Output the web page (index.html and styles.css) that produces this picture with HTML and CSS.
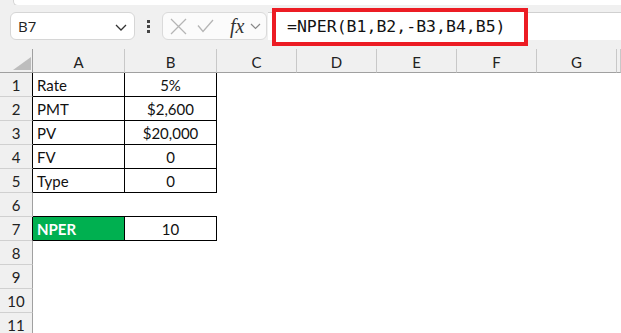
FILE: index.html
```html
<!DOCTYPE html>
<html lang="en">
<head>
  <meta charset="UTF-8">
  <title>NPER - Excel</title>
  <link rel="stylesheet" href="styles.css">
</head>
<body>
  <div class="ribbon-edge"></div>

  <!-- Name box + formula bar -->
  <div class="toolbar">
    <div class="name-box">
      <span>B7</span>
      <svg class="chev" width="12" height="7" viewBox="0 0 12 7"><path d="M1 1 L6 6 L11 1" fill="none" stroke="#333" stroke-width="1.3"/></svg>
    </div>
    <div class="grip"><i></i><i></i><i></i></div>
    <div class="fx-box">
      <svg width="17" height="17" viewBox="0 0 17 17"><path d="M1 1 L16 16 M16 1 L1 16" stroke="#b5b5b5" stroke-width="1.3"/></svg>
      <svg width="17" height="14" viewBox="0 0 17 14"><path d="M1 6.5 L6 12.5 L16 1" fill="none" stroke="#b5b5b5" stroke-width="1.3"/></svg>
      <span class="fx">fx</span>
      <svg width="11" height="7" viewBox="0 0 11 7"><path d="M1 1 L5.5 5.5 L10 1" fill="none" stroke="#888" stroke-width="1.2"/></svg>
    </div>
    <div class="formula-bar">
      <div class="formula">=NPER(B1,B2,-B3,B4,B5)</div>
    </div>
  </div>

  <table class="sheet">
    <colgroup>
      <col class="c-row"><col class="c-wide"><col class="c-wide">
      <col class="c-std"><col class="c-std"><col class="c-std"><col class="c-std"><col class="c-std"><col>
    </colgroup>
    <tr class="head">
      <th class="corner"><span class="tri"></span></th>
      <th>A</th><th>B</th><th>C</th><th>D</th><th>E</th><th>F</th><th>G</th><th></th>
    </tr>
    <tr>
      <th class="rh edge">1</th><td class="box">Rate</td><td class="box num">5%</td>
      <td></td><td></td><td></td><td></td><td></td><td></td>
    </tr>
    <tr>
      <th class="rh edge">2</th><td class="box">PMT</td><td class="box num">$2,600</td>
      <td></td><td></td><td></td><td></td><td></td><td></td>
    </tr>
    <tr>
      <th class="rh edge">3</th><td class="box">PV</td><td class="box num">$20,000</td>
      <td></td><td></td><td></td><td></td><td></td><td></td>
    </tr>
    <tr>
      <th class="rh edge">4</th><td class="box">FV</td><td class="box num">0</td>
      <td></td><td></td><td></td><td></td><td></td><td></td>
    </tr>
    <tr>
      <th class="rh edge">5</th><td class="box">Type</td><td class="box num">0</td>
      <td></td><td></td><td></td><td></td><td></td><td></td>
    </tr>
    <tr>
      <th class="rh">6</th><td class="under"></td><td class="under"></td>
      <td></td><td></td><td></td><td></td><td></td><td></td>
    </tr>
    <tr>
      <th class="rh edge">7</th><td class="box result">NPER</td><td class="box num">10</td>
      <td></td><td></td><td></td><td></td><td></td><td></td>
    </tr>
    <tr><th class="rh">8</th><td></td><td></td><td></td><td></td><td></td><td></td><td></td><td></td></tr>
    <tr><th class="rh">9</th><td></td><td></td><td></td><td></td><td></td><td></td><td></td><td></td></tr>
    <tr><th class="rh">10</th><td></td><td></td><td></td><td></td><td></td><td></td><td></td><td></td></tr>
    <tr><th class="rh">11</th><td></td><td></td><td></td><td></td><td></td><td></td><td></td><td></td></tr>
  </table>
</body>
</html>
```

FILE: styles.css
```css
* {
  box-sizing: border-box;
}

body {
  margin: 0;
  background: #fff;
  font-family: 'Lato', 'Liberation Sans', sans-serif;
  color: #111;
  overflow: hidden;
  width: 621px;
  height: 333px;
}

/* top of ribbon panel */
.ribbon-edge {
  height: 5px;
  background: #f0f0f0;
}

.ribbon-edge::after {
  content: "";
  display: block;
  margin-left: 13px;
  height: 5px;
  background: #fff;
  border-left: 1px solid #d4d4d4;
  border-bottom: 1px solid #d4d4d4;
  border-bottom-left-radius: 5px;
}

/* Toolbar */
.toolbar {
  height: 44px;
  background: #f0f0f0;
  display: flex;
  align-items: flex-start;
  padding-top: 7px;
  padding-left: 10px;
}

.name-box {
  width: 125px;
  height: 28px;
  background: #fff;
  border: 1px solid #d6d6d6;
  border-radius: 6px;
  display: flex;
  align-items: center;
  justify-content: space-between;
  padding: 0 7px 0 7px;
  font-family: 'Open Sans', sans-serif;
  font-size: 15px;
  color: #222;
}

.name-box .chev {
  margin-top: 2px;
}

.grip {
  width: 27px;
  height: 28px;
  display: flex;
  flex-direction: column;
  align-items: center;
  justify-content: center;
  gap: 2px;
}

.grip i {
  display: block;
  width: 3px;
  height: 3px;
  background: #444;
}

.fx-box {
  width: 105px;
  height: 28px;
  background: #fbfbfb;
  border: 1px solid #dadada;
  border-radius: 6px;
  display: flex;
  align-items: center;
  padding-left: 7px;
  gap: 10px;
}

.fx-box .fx {
  font-family: 'Liberation Serif', serif;
  font-style: italic;
  font-size: 20px;
  color: #333;
  margin-left: 6px;
  margin-right: -4px;
  line-height: 1;
}

.formula-bar {
  flex: 1;
  height: 28px;
  background: #fff;
  border-top: 1px solid #d0d0d0;
  margin-left: 1px;
  display: flex;
  align-items: center;
}

.formula {
  flex: none;
  width: 256px;
  height: 38px;
  margin-left: 4px;
  border: 4px solid #ec1c24;
  background: #fff;
  font-family: 'DejaVu Sans Mono', monospace;
  font-size: 16.5px;
  color: #111;
  padding-left: 11px;
  line-height: 29px;
  white-space: nowrap;
}

/* Grid */
.sheet {
  table-layout: fixed;
  width: 621px;
  border-collapse: separate;
  border-spacing: 0;
  font-size: 15px;
}

.c-row { width: 33px; }
.c-wide { width: 92px; }
.c-std { width: 80px; }

.sheet td,
.sheet th {
  height: 24px;
  padding: 0;
  font-weight: normal;
}

.head th {
  background: #f0f0f0;
  border-right: 1px solid #c8c8c8;
  border-bottom: 1px solid #a0a0a0;
  text-align: center;
  color: #222;
  padding-top: 2px;
}

.head .corner {
  position: relative;
  border-right-color: #a0a0a0;
}

.tri {
  position: absolute;
  right: 1px;
  bottom: 2px;
  width: 0;
  height: 0;
  border-left: 18px solid transparent;
  border-bottom: 13px solid #bdbdbd;
}

.rh {
  background: #f0f0f0;
  border-right: 1px solid #a0a0a0;
  border-bottom: 1px solid #d0d0d0;
  text-align: center;
  color: #222;
}

.rh.edge {
  border-right-color: #000;
}

.box {
  border-right: 1px solid #000;
  border-bottom: 1px solid #000;
  padding-left: 4px !important;
  white-space: nowrap;
}

.under {
  border-bottom: 1px solid #000;
}

.num {
  text-align: center;
  padding-left: 0 !important;
}

.sheet .result {
  background: #00b050;
  color: #fff;
  font-weight: bold;
}
```
